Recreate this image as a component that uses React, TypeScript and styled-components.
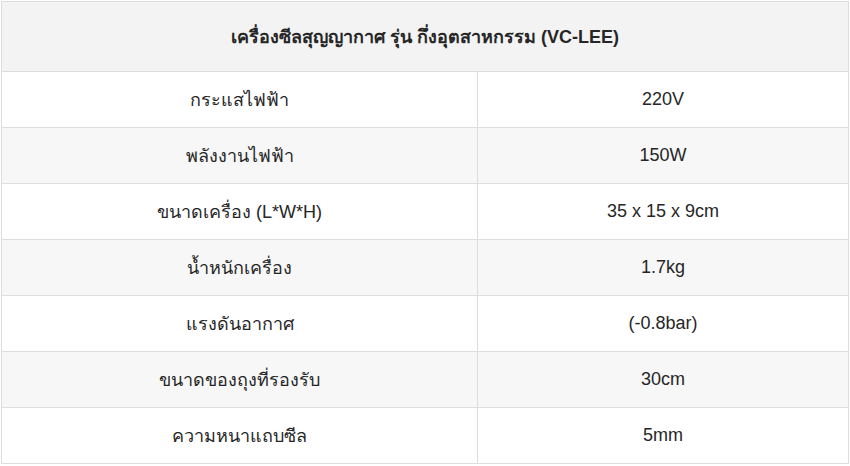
import React from "react";
import styled, { createGlobalStyle } from "styled-components";

const Global = createGlobalStyle`
  html, body { margin: 0; padding: 0; background: #ffffff; }
  body { font-family: "Liberation Sans", Arial, sans-serif; }
`;

const Wrap = styled.div`
  padding: 1px 0 0 1px;
`;

const Table = styled.table`
  width: 847px;
  border-collapse: collapse;
  table-layout: fixed;
  font-family: "Liberation Sans", Arial, sans-serif;
  font-size: 18px;
  color: #262626;
  border: 1px solid #dddddd;
`;

const HeadCell = styled.th`
  height: 69px;
  padding: 0;
  background: #f3f3f3;
  font-weight: 700;
  text-align: center;
  border: 1px solid #dddddd;
`;

const Row = styled.tr<{ $alt: boolean }>`
  background: ${(p) => (p.$alt ? "#f7f7f7" : "#ffffff")};
`;

const Cell = styled.td`
  height: 55px;
  padding: 0;
  text-align: center;
  border: 1px solid #dddddd;
`;

const rows: [string, string][] = [
  ["กระแสไฟฟ้า", "220V"],
  ["พลังงานไฟฟ้า", "150W"],
  ["ขนาดเครื่อง (L*W*H)", "35 x 15 x 9cm"],
  ["น้ำหนักเครื่อง", "1.7kg"],
  ["แรงดันอากาศ", "(-0.8bar)"],
  ["ขนาดของถุงที่รองรับ", "30cm"],
  ["ความหนาแถบซีล", "5mm"],
];

export default function App() {
  return (
    <>
      <Global />
      <Wrap>
        <Table>
          <colgroup>
            <col style={{ width: 476 }} />
            <col style={{ width: 371 }} />
          </colgroup>
          <thead>
            <tr>
              <HeadCell colSpan={2}>
                เครื่องซีลสุญญากาศ รุ่น กึ่งอุตสาหกรรม (VC-LEE)
              </HeadCell>
            </tr>
          </thead>
          <tbody>
            {rows.map(([k, v], i) => (
              <Row key={k} $alt={i % 2 === 1}>
                <Cell>{k}</Cell>
                <Cell>{v}</Cell>
              </Row>
            ))}
          </tbody>
        </Table>
      </Wrap>
    </>
  );
}
